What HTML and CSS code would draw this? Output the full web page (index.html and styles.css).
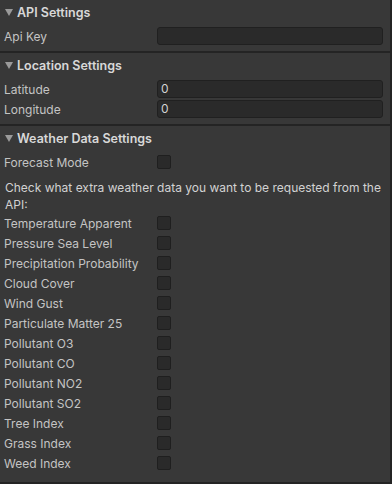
FILE: index.html
```html
<!DOCTYPE html>
<html lang="en">
<head>
  <meta charset="UTF-8">
  <title>Weather Inspector</title>
  <link rel="stylesheet" href="styles.css">
</head>
<body>
  <div class="inspector">
    <div class="section first">
      <div class="header"><span class="arrow"></span>API Settings</div>
      <div class="row">
        <label>Api Key</label>
        <div class="field"></div>
      </div>
    </div>

    <div class="section second">
      <div class="header"><span class="arrow"></span>Location Settings</div>
      <div class="row">
        <label>Latitude</label>
        <div class="field">0</div>
      </div>
      <div class="row">
        <label>Longitude</label>
        <div class="field">0</div>
      </div>
    </div>

    <div class="section third">
      <div class="header"><span class="arrow"></span>Weather Data Settings</div>
      <div class="row">
        <label>Forecast Mode</label>
        <div class="check"></div>
      </div>
      <p class="note">Check what extra weather data you want to be requested from the API:</p>
      <div class="row"><label>Temperature Apparent</label><div class="check"></div></div>
      <div class="row"><label>Pressure Sea Level</label><div class="check"></div></div>
      <div class="row"><label>Precipitation Probability</label><div class="check"></div></div>
      <div class="row"><label>Cloud Cover</label><div class="check"></div></div>
      <div class="row"><label>Wind Gust</label><div class="check"></div></div>
      <div class="row"><label>Particulate Matter 25</label><div class="check"></div></div>
      <div class="row"><label>Pollutant O3</label><div class="check"></div></div>
      <div class="row"><label>Pollutant CO</label><div class="check"></div></div>
      <div class="row"><label>Pollutant NO2</label><div class="check"></div></div>
      <div class="row"><label>Pollutant SO2</label><div class="check"></div></div>
      <div class="row"><label>Tree Index</label><div class="check"></div></div>
      <div class="row"><label>Grass Index</label><div class="check"></div></div>
      <div class="row"><label>Weed Index</label><div class="check"></div></div>
    </div>
  </div>
</body>
</html>
```

FILE: styles.css
```css
body {
  margin: 0;
  background-color: #383838;
  font-family: Inter, 'Noto Sans', sans-serif;
  font-size: 12px;
  color: #c4c4c4;
}

.inspector {
  width: 390px;
  height: 484px;
  border-right: 2px solid #242424;
  display: flex;
  flex-direction: column;
}

.section {
  display: flex;
  flex-direction: column;
  border-bottom: 2px solid #242424;
}

.first {
  padding: 1px 0 5px;
}

.second {
  padding: 1px 0 5px;
}

.third {
  padding: 1px 0 0;
  flex: 1;
}

.header {
  height: 22px;
  display: flex;
  align-items: center;
  font-weight: 600;
  font-size: 12.5px;
  color: #d8d8d8;
  padding-left: 5px;
  margin-bottom: 3px;
}

.arrow {
  width: 0;
  height: 0;
  border-left: 4px solid transparent;
  border-right: 4px solid transparent;
  border-top: 7px solid #9a9a9a;
  margin-right: 4px;
}

.row {
  height: 20px;
  display: flex;
  align-items: center;
  padding-left: 4px;
}

.row label {
  width: 153px;
  flex-shrink: 0;
}

.field {
  width: 221px;
  height: 16px;
  line-height: 16px;
  background-color: #2a2a2a;
  border: 1px solid #202020;
  border-radius: 3px;
  padding-left: 3px;
  color: #d2d2d2;
}

.check {
  width: 12px;
  height: 12px;
  background-color: #2a2a2a;
  border: 1px solid #1f1f1f;
  border-radius: 2px;
}

.note {
  margin: 7px 0 0;
  padding: 0 4px 0 5px;
  font-size: 12px;
  line-height: 17px;
  color: #d2d2d2;
}
```
